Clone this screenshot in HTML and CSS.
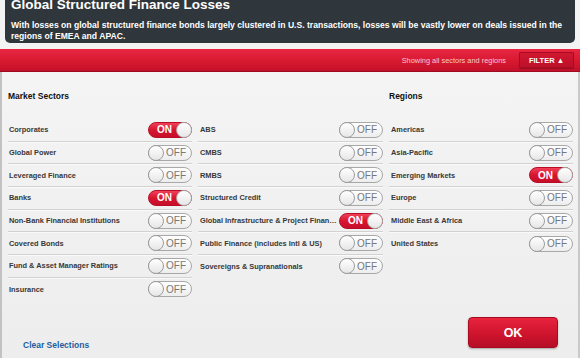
FILE: index.html
```html
<!DOCTYPE html>
<html lang="en">
  <head>
    <title> Global Structured Finance Losses </title>
    <meta charset="utf-8">
    <link rel="stylesheet" href="styles.css">
  </head>

  <body>
    <div class="intro">
      <h1> Global Structured Finance Losses </h1>
      <p> With losses on global structured finance bonds largely clustered in U.S. transactions, losses will be vastly lower on deals issued in the regions of EMEA and APAC. </p>
    </div>

    <div class="filterbar">
      <span class="status"> Showing all sectors and regions </span>
      <button class="filter-btn"> FILTER &#9650; </button>
    </div>

    <div class="filters">
      <div class="columns">
        <div class="column">
          <h2> Market Sectors </h2>
          <div class="row"><span class="label">Corporates</span><span class="toggle on"><span class="txt">ON</span><span class="knob"></span></span></div>
          <div class="row"><span class="label">Global Power</span><span class="toggle"><span class="knob"></span><span class="txt">OFF</span></span></div>
          <div class="row"><span class="label">Leveraged Finance</span><span class="toggle"><span class="knob"></span><span class="txt">OFF</span></span></div>
          <div class="row"><span class="label">Banks</span><span class="toggle on"><span class="txt">ON</span><span class="knob"></span></span></div>
          <div class="row"><span class="label">Non-Bank Financial Institutions</span><span class="toggle"><span class="knob"></span><span class="txt">OFF</span></span></div>
          <div class="row"><span class="label">Covered Bonds</span><span class="toggle"><span class="knob"></span><span class="txt">OFF</span></span></div>
          <div class="row"><span class="label">Fund &amp; Asset Manager Ratings</span><span class="toggle"><span class="knob"></span><span class="txt">OFF</span></span></div>
          <div class="row"><span class="label">Insurance</span><span class="toggle"><span class="knob"></span><span class="txt">OFF</span></span></div>
        </div>

        <div class="column">
          <h2> &nbsp; </h2>
          <div class="row"><span class="label">ABS</span><span class="toggle"><span class="knob"></span><span class="txt">OFF</span></span></div>
          <div class="row"><span class="label">CMBS</span><span class="toggle"><span class="knob"></span><span class="txt">OFF</span></span></div>
          <div class="row"><span class="label">RMBS</span><span class="toggle"><span class="knob"></span><span class="txt">OFF</span></span></div>
          <div class="row"><span class="label">Structured Credit</span><span class="toggle"><span class="knob"></span><span class="txt">OFF</span></span></div>
          <div class="row"><span class="label">Global Infrastructure &amp; Project Finance</span><span class="toggle on"><span class="txt">ON</span><span class="knob"></span></span></div>
          <div class="row"><span class="label">Public Finance (includes Intl &amp; US)</span><span class="toggle"><span class="knob"></span><span class="txt">OFF</span></span></div>
          <div class="row"><span class="label">Sovereigns &amp; Supranationals</span><span class="toggle"><span class="knob"></span><span class="txt">OFF</span></span></div>
        </div>

        <div class="column">
          <h2> Regions </h2>
          <div class="row"><span class="label">Americas</span><span class="toggle"><span class="knob"></span><span class="txt">OFF</span></span></div>
          <div class="row"><span class="label">Asia-Pacific</span><span class="toggle"><span class="knob"></span><span class="txt">OFF</span></span></div>
          <div class="row"><span class="label">Emerging Markets</span><span class="toggle on"><span class="txt">ON</span><span class="knob"></span></span></div>
          <div class="row"><span class="label">Europe</span><span class="toggle"><span class="knob"></span><span class="txt">OFF</span></span></div>
          <div class="row"><span class="label">Middle East &amp; Africa</span><span class="toggle"><span class="knob"></span><span class="txt">OFF</span></span></div>
          <div class="row"><span class="label">United States</span><span class="toggle"><span class="knob"></span><span class="txt">OFF</span></span></div>
        </div>
      </div>

      <div class="footer">
        <a class="clear" href="#"> Clear Selections </a>
        <button class="ok-btn"> OK </button>
      </div>
    </div>
  </body>
</html>
```

FILE: styles.css
```css
html, body {
  height: 100%;
  margin: 0;
}
body {
  display: flex;
  flex-direction: column;
  background-color: #f3f3f3;
  font-family: "Liberation Sans", Arial, sans-serif;
  overflow: hidden;
}
.intro {
  margin: 0 5px;
  height: 43px;
  flex-shrink: 0;
  box-sizing: border-box;
  padding: 0 6px;
  background-color: #30373c;
  border-radius: 0 0 5px 5px;
  color: #fff;
  overflow: hidden;
}
.intro h1 {
  margin: -2px 0 0 0;
  font-size: 13.5px;
  line-height: 14px;
  font-weight: bold;
}
.intro p {
  margin: 8px 0 0 0;
  font-size: 8.6px;
  line-height: 10.5px;
  font-weight: bold;
}
.filterbar {
  margin-top: 6px;
  height: 23px;
  flex-shrink: 0;
  box-sizing: border-box;
  display: flex;
  align-items: center;
  justify-content: flex-end;
  padding: 0 6px 0 0;
  background: linear-gradient(#e82642, #d6182f 60%, #c3102a);
  border-bottom: 1px solid #9e0c22;
}
.status {
  color: #f6c9cf;
  font-size: 7.4px;
  margin-right: 13px;
}
.filter-btn {
  width: 55px;
  height: 16px;
  padding: 0;
  font-family: "Liberation Sans", Arial, sans-serif;
  font-size: 7.5px;
  font-weight: bold;
  color: #fff;
  background: linear-gradient(#cf1830, #bd1029);
  border: 1px solid #a80c23;
  border-radius: 1px;
  box-shadow: 0 1px 1px rgba(0, 0, 0, 0.25);
}
.filters {
  flex: 1;
  display: flex;
  flex-direction: column;
  border-left: 2px solid #c2c2c2;
  border-right: 2px solid #c9c9c9;
  background: linear-gradient(#f4f4f4, #ededed);
}
.columns {
  display: flex;
  gap: 6px;
  padding: 19px 5px 0 6px;
}
.column {
  width: 184px;
}
.column:nth-child(2) {
  width: 185px;
}
.column h2 {
  margin: 0 0 18px 0;
  font-size: 8.5px;
  line-height: 10px;
  font-weight: bold;
  color: #111;
}
.row {
  height: 22.7px;
  box-sizing: border-box;
  display: flex;
  align-items: center;
  border-bottom: 1px solid #d2d2d2;
  box-shadow: 0 1px 0 #fafafa;
}
.row:last-child {
  border-bottom: none;
  box-shadow: none;
}
.label {
  flex: 1;
  min-width: 0;
  margin-right: 2px;
  padding-left: 1px;
  font-size: 7.4px;
  font-weight: bold;
  color: #383838;
  white-space: nowrap;
  overflow: hidden;
  text-overflow: ellipsis;
}
.column:nth-child(n+2) .label {
  padding-left: 2px;
}
.toggle {
  width: 44px;
  height: 16px;
  box-sizing: border-box;
  display: flex;
  align-items: center;
  flex-shrink: 0;
  border: 1px solid #a8a8a8;
  border-radius: 8px;
  background: linear-gradient(#ffffff, #ededed);
  font-size: 10px;
  color: #777;
}
.toggle .knob {
  width: 16px;
  height: 16px;
  margin: -1px;
  box-sizing: border-box;
  border-radius: 50%;
  border: 1px solid #9d9d9d;
  background: linear-gradient(#ffffff, #e6e6e6);
}
.toggle .txt {
  margin-left: 3px;
}
.toggle.on {
  border-color: #b80d27;
  background: linear-gradient(#f04058, #d9152f 50%, #c60e2a);
  color: #fff;
  font-weight: bold;
  justify-content: space-between;
}
.toggle.on .txt {
  margin-left: 8px;
}
.toggle.on .knob {
  border-color: #a9a9a9;
}
.footer {
  margin-top: auto;
  display: flex;
  justify-content: space-between;
  align-items: flex-end;
  padding: 0 20px 10px 21px;
}
.clear {
  margin-bottom: -2px;
  font-size: 8.5px;
  line-height: 10px;
  font-weight: bold;
  color: #1d5da3;
  text-decoration: none;
}
.ok-btn {
  width: 90px;
  height: 31px;
  padding: 0;
  font-family: "Liberation Sans", Arial, sans-serif;
  font-size: 12.5px;
  font-weight: bold;
  color: #fff;
  background: linear-gradient(#e8233e, #cf142e 55%, #b50d26);
  border: 1px solid #a60b22;
  border-radius: 4px;
  box-shadow: 0 1px 2px rgba(0, 0, 0, 0.3);
}
```
